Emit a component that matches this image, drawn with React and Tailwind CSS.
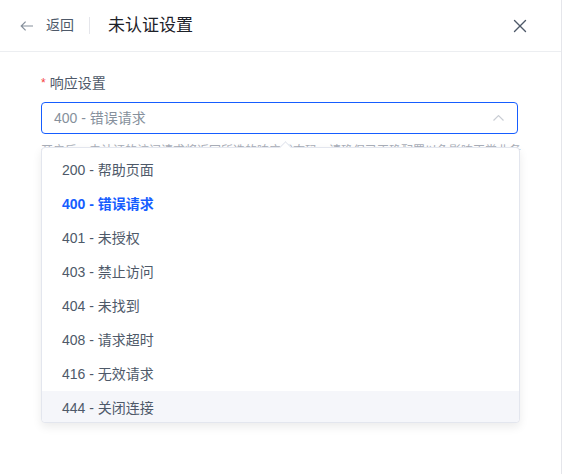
import React, { useState } from 'react';
import { X } from 'lucide-react';

const options = [
  { value: 200, label: '200 - 帮助页面' },
  { value: 400, label: '400 - 错误请求' },
  { value: 401, label: '401 - 未授权' },
  { value: 403, label: '403 - 禁止访问' },
  { value: 404, label: '404 - 未找到' },
  { value: 408, label: '408 - 请求超时' },
  { value: 416, label: '416 - 无效请求' },
  { value: 444, label: '444 - 关闭连接' },
];

const App = () => {
  const [selected, setSelected] = useState(400);
  const [hovered, setHovered] = useState(444);
  const current = options.find((o) => o.value === selected);

  return (
    <div
      className="w-[562px] h-[474px] bg-white border-r border-[#e5e6eb] flex flex-col overflow-hidden"
      style={{ fontFamily: '"Liberation Sans", "Noto Sans CJK SC", sans-serif' }}
    >
      {/* header */}
      <div className="h-[52px] shrink-0 border-b border-[#eceef1] flex items-center pl-[20px] pr-[30px]">
        <button className="flex items-center gap-[12px] text-[14px] text-[#4e5969]">
          <svg width="14" height="10" viewBox="0 0 14 10" fill="none" stroke="#86909c" strokeWidth="1.2">
            <path d="M13 5H1.2M5.6 0.6L1.2 5l4.4 4.4" />
          </svg>
          <span>返回</span>
        </button>
        <div className="w-px h-[17px] bg-[#e5e6eb] ml-[15px] mr-[18px]" />
        <h2 className="text-[17px] text-[#1d2129]">未认证设置</h2>
        <button className="ml-auto text-[#4e5969]">
          <X size={22} strokeWidth={1.5} />
        </button>
      </div>

      {/* body */}
      <div className="px-[41px] pt-[20px]">
        <label className="flex items-center text-[14px] leading-[22px] text-[#4e5969] mb-[8px]">
          <span className="text-[#f53f3f] mr-[4px] text-[12px]">*</span>
          响应设置
        </label>

        <div className="relative">
          <div className="h-[32px] w-[477px] border border-[#165dff] rounded-[4px] flex items-center pl-[12px] pr-[13px]">
            <span className="text-[14px] text-[#86909c]">{current.label}</span>
            <svg className="ml-auto" width="11" height="6" viewBox="0 0 11 6" fill="none" stroke="#c9cdd4" strokeWidth="1.2">
              <path d="M0.5 5.5L5.5 0.6l5 4.9" />
            </svg>
          </div>

          <p className="mt-[8px] text-[12px] leading-[18px] text-[#a9aeb8] whitespace-nowrap">
            开启后，未认证的访问请求将返回所选的响应状态码，请确保已正确配置以免影响正常业务
          </p>

          {/* dropdown */}
          <div className="absolute left-0 top-[45px] w-[479px] h-[276px] bg-white border border-[#e3e6ee] rounded-[4px] shadow-[0_4px_10px_rgba(0,0,0,0.08)] z-10">
            <div className="absolute left-1/2 -top-[5px] w-[9px] h-[9px] rotate-45 bg-white border-l border-t border-[#e3e6ee]" />
            <ul className="relative h-full pt-[5px] overflow-hidden rounded-[4px]">
              {options.map((o) => (
                <li
                  key={o.value}
                  onClick={() => setSelected(o.value)}
                  onMouseEnter={() => setHovered(o.value)}
                  className={`h-[34px] flex items-center pl-[20px] text-[14px] cursor-pointer ${
                    hovered === o.value ? 'bg-[#f5f6fa]' : ''
                  } ${selected === o.value ? 'text-[#165dff] font-bold' : 'text-[#4e5969]'}`}
                >
                  {o.label}
                </li>
              ))}
            </ul>
          </div>
        </div>
      </div>
    </div>
  );
};

export default App;
